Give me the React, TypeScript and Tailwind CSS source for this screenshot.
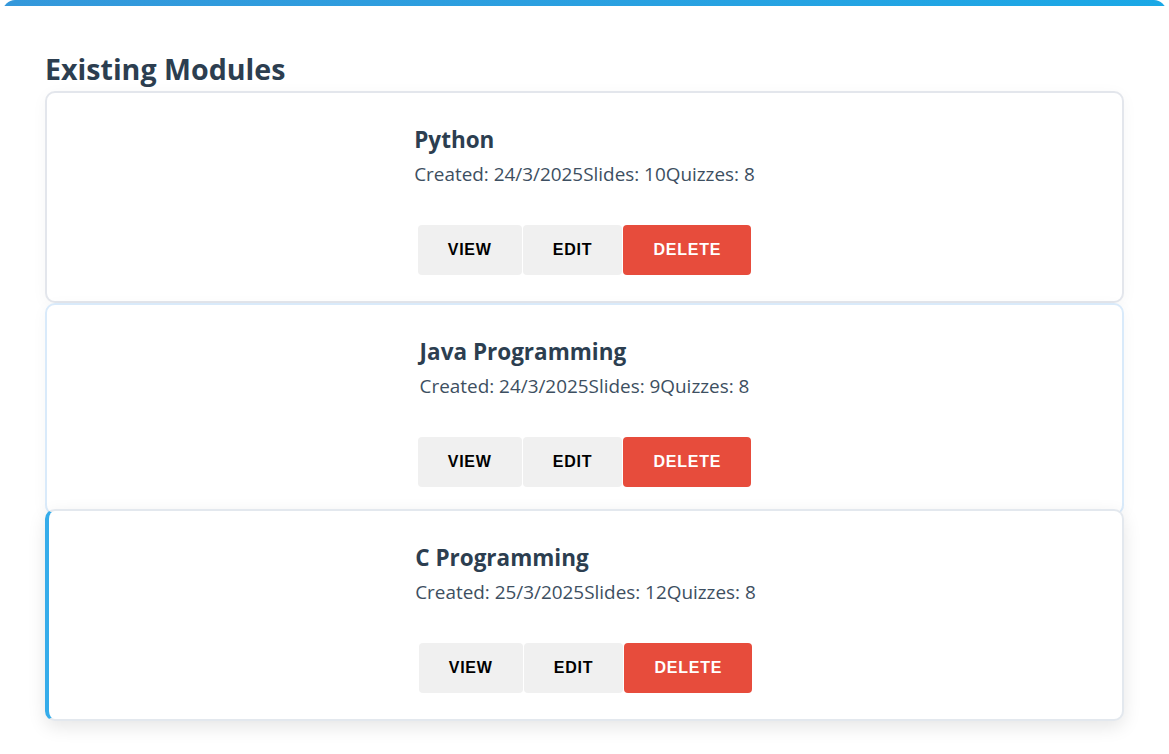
const modules = [
  { id: 1, title: "Python", created: "24/3/2025", slides: 10, quizzes: 8 },
  { id: 2, title: "Java Programming", created: "24/3/2025", slides: 9, quizzes: 8 },
  { id: 3, title: "C Programming", created: "25/3/2025", slides: 12, quizzes: 8 },
];

type Mod = (typeof modules)[number];

function ModuleCard({ mod, state }: { mod: Mod; state: "idle" | "fading" | "hover" }) {
  const look =
    state === "hover"
      ? "border-[#e3e8ee] border-l-[4px] border-l-[#35acea] -translate-y-[6px] shadow-[0_6px_18px_rgba(0,0,0,0.10)] z-10"
      : state === "fading"
        ? "border-[#d9eafa] shadow-[0_3px_16px_rgba(0,0,0,0.04)]"
        : "border-[#e3e6ec] shadow-[0_3px_16px_rgba(0,0,0,0.04)]";
  return (
    <div
      className={`relative flex flex-col items-center rounded-[10px] border-2 bg-white pt-[33px] pb-[26px] ${look}`}
    >
      <div className="text-left">
        <h3 className="text-[22.5px] font-bold leading-[28px] text-[#2c3e50]">{mod.title}</h3>
        <p className="mt-[8px] text-[18.9px] leading-[24px] text-[#3d4f61]">
          <span>Created: {mod.created}</span>
          <span>Slides: {mod.slides}</span>
          <span>Quizzes: {mod.quizzes}</span>
        </p>
      </div>
      <div className="mt-[39px] flex gap-px font-['Liberation_Sans',Arial,sans-serif] text-[16px] font-bold tracking-[0.8px]">
        <button className="h-[50px] rounded-[4px] bg-[#f0f0f0] px-[30px] text-black">VIEW</button>
        <button className="h-[50px] rounded-[4px] bg-[#f0f0f0] px-[30px] text-black">EDIT</button>
        <button className="h-[50px] rounded-[4px] bg-[#e74c3c] px-[30px] text-white">DELETE</button>
      </div>
    </div>
  );
}

export default function App() {
  return (
    <div className="min-h-screen bg-white font-['Open_Sans','Noto_Sans',sans-serif]">
      <div className="mx-[3px] overflow-hidden rounded-t-[12px] bg-white pb-[30px]">
        <div className="h-[6px] bg-gradient-to-r from-[#3498db] to-[#1aa8e6]" />
        <div className="px-[42px] pt-[46px]">
          <h2 className="mb-[5px] text-[28.6px] font-bold leading-[34px] text-[#2c3e50]">
            Existing Modules
          </h2>
          <div className="flex flex-col">
            {modules.map((m, i) => (
              <ModuleCard key={m.id} mod={m} state={i === 2 ? "hover" : i === 1 ? "fading" : "idle"} />
            ))}
          </div>
        </div>
      </div>
    </div>
  );
}
